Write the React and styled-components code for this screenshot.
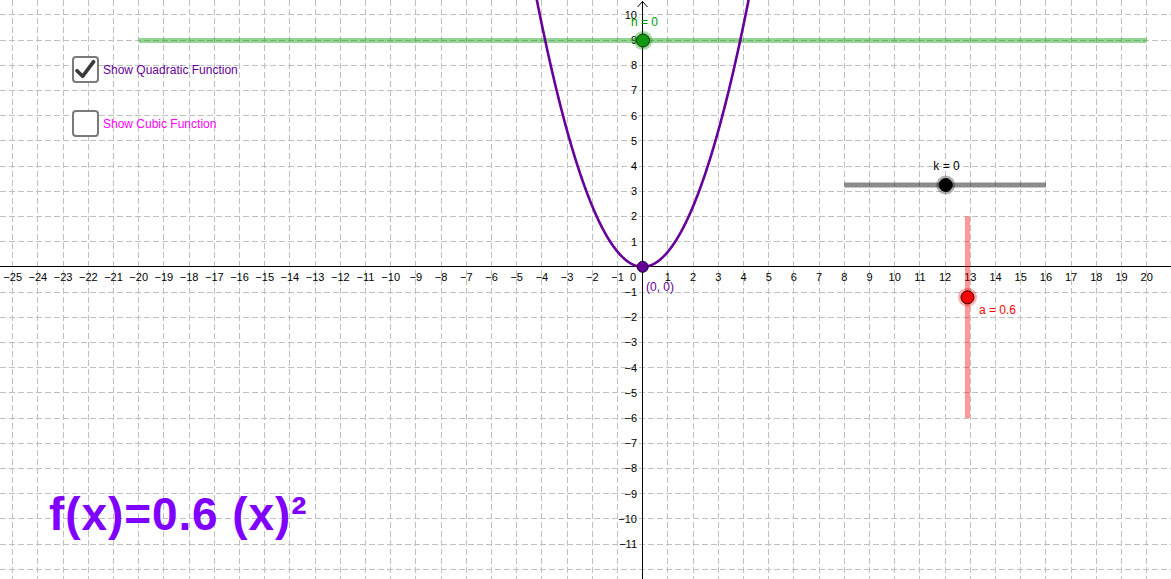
import React from "react";
import styled, { createGlobalStyle } from "styled-components";

const W = 1171;
const H = 579;
const U = 25.2;
const OX = 642.7;
const OY = 266.8;
const sx = (x) => OX + x * U;
const sy = (y) => OY - y * U;
const px = (v) => Math.floor(v) + 0.5;

const Global = createGlobalStyle`
  html, body { margin: 0; padding: 0; background: #ffffff; }
  body { font-family: "Liberation Sans", Arial, sans-serif; overflow: hidden; }
`;

const Page = styled.div`
  position: relative;
  width: ${W}px;
  height: ${H}px;
  background: #ffffff;
  overflow: hidden;
`;

const GraphSvg = styled.svg`
  display: block;
  width: ${W}px;
  height: ${H}px;
  font-family: "Liberation Sans", Arial, sans-serif;
`;

const CheckRow = styled.label`
  position: absolute;
  left: 72px;
  top: ${(p) => p.$top}px;
  display: flex;
  align-items: center;
  gap: 4px;
  cursor: pointer;
`;

const Box = styled.span`
  width: 23px;
  height: 23px;
  border: 2px solid #7a7a7a;
  border-radius: 4px;
  background: #ffffff;
  display: flex;
  align-items: center;
  justify-content: center;
`;

const CheckText = styled.span`
  font-family: "Liberation Sans", Arial, sans-serif;
  font-size: 12px;
  color: ${(p) => p.$color};
`;

const Formula = styled.div`
  position: absolute;
  left: 49px;
  top: 491px;
  font-family: "Liberation Sans", Arial, sans-serif;
  font-weight: bold;
  font-size: 46px;
  letter-spacing: 0.9px;
  line-height: 1;
  color: #7f00ff;
  white-space: pre;
`;

const range = (a, b) => {
  const r = [];
  for (let i = a; i <= b; i++) r.push(i);
  return r;
};

const parabola = () => {
  const pts = [];
  for (let x = -4.4; x <= 4.4001; x += 0.02) {
    pts.push(`${sx(x).toFixed(2)},${sy(0.6 * x * x).toFixed(2)}`);
  }
  return "M" + pts.join(" L");
};

const minus = (n) => (n < 0 ? "\u2212" + Math.abs(n) : String(n));

function Graph() {
  const vx = range(-25, 21);
  const hy = range(-12, 10);
  return (
    <GraphSvg viewBox={`0 0 ${W} ${H}`}>
      <g stroke="#c0c0c0" strokeWidth="1" strokeDasharray="6 3">
        {vx.map((x) =>
          x === 0 ? null : (
            <line key={"v" + x} x1={px(sx(x))} y1={0} x2={px(sx(x))} y2={H} />
          )
        )}
        {hy.map((y) =>
          y === 0 ? null : (
            <line key={"h" + y} x1={0} y1={px(sy(y))} x2={W} y2={px(sy(y))} />
          )
        )}
      </g>

      <g stroke="#000" strokeWidth="1" fill="none">
        <line x1={0} y1={px(OY)} x2={W} y2={px(OY)} />
        <line x1={px(OX)} y1={1} x2={px(OX)} y2={H} />
        <polyline points={`${px(OX) - 5},7 ${px(OX)},1.5 ${px(OX) + 5},7`} />
      </g>

      <g fontSize="11" fill="#000" textAnchor="middle">
        {range(-25, 20).map((x) =>
          x === 0 ? null : (
            <text key={"lx" + x} x={sx(x)} y={281}>
              {minus(x)}
            </text>
          )
        )}
        <text x={633} y={281}>0</text>
      </g>
      <g fontSize="11" fill="#000" textAnchor="end">
        {range(-11, 10).map((y) =>
          y === 0 ? null : (
            <text key={"ly" + y} x={637} y={sy(y) + 4}>
              {minus(y)}
            </text>
          )
        )}
      </g>

      {/* h slider */}
      <line
        x1={sx(-20)}
        y1={40.5}
        x2={sx(20)}
        y2={40.5}
        stroke="#009900"
        strokeOpacity="0.42"
        strokeWidth="5"
      />
      {/* k slider */}
      <line
        x1={sx(8)}
        y1={185}
        x2={sx(16)}
        y2={185}
        stroke="#000"
        strokeOpacity="0.45"
        strokeWidth="5"
      />
      {/* a slider */}
      <line
        x1={967.5}
        y1={sy(2)}
        x2={967.5}
        y2={sy(-6)}
        stroke="#ff0000"
        strokeOpacity="0.4"
        strokeWidth="5"
      />

      <path d={parabola()} fill="none" stroke="#660099" strokeWidth="2.6" />

      {/* points */}
      <circle cx={643} cy={40.5} r={9.5} fill="#009900" fillOpacity="0.35" />
      <circle cx={643} cy={40.5} r={6.5} fill="#0f990f" stroke="#0b2b0b" strokeWidth="1" />

      <circle cx={945.7} cy={185} r={9.5} fill="#000" fillOpacity="0.3" />
      <circle cx={945.7} cy={185} r={6.5} fill="#000" stroke="#000" strokeWidth="1" />

      <circle cx={967.5} cy={297.3} r={9.5} fill="#ff0000" fillOpacity="0.3" />
      <circle cx={967.5} cy={297.3} r={6.5} fill="#ff0000" stroke="#3a0000" strokeWidth="1" />

      <circle cx={642.7} cy={266.8} r={5.5} fill="#660099" stroke="#1a0026" strokeWidth="1" />

      <g fontSize="12">
        <text x={631} y={26} fill="#009900">h = 0</text>
        <text x={946.5} y={170} fill="#000" textAnchor="middle">k = 0</text>
        <text x={979} y={314} fill="#ff0000">a = 0.6</text>
        <text x={646} y={291} fill="#660099">(0, 0)</text>
      </g>
    </GraphSvg>
  );
}

function Checkbox({ checked, top, color, children }) {
  return (
    <CheckRow $top={top}>
      <Box>
        {checked && (
          <svg width="23" height="23" viewBox="0 0 23 23">
            <path
              d="M3 12.7 L8.6 18.3 L19.6 3.7"
              fill="none"
              stroke="#3a3a3a"
              strokeWidth="3.6"
              strokeLinecap="round"
              strokeLinejoin="round"
            />
          </svg>
        )}
      </Box>
      <CheckText $color={color}>{children}</CheckText>
    </CheckRow>
  );
}

export default function App() {
  return (
    <>
      <Global />
      <Page>
        <Graph />
        <Checkbox checked top={56} color="#660099">
          Show Quadratic Function
        </Checkbox>
        <Checkbox top={110} color="#ff00ff">
          Show Cubic Function
        </Checkbox>
        <Formula>f(x)=0.6 (x)²</Formula>
      </Page>
    </>
  );
}
